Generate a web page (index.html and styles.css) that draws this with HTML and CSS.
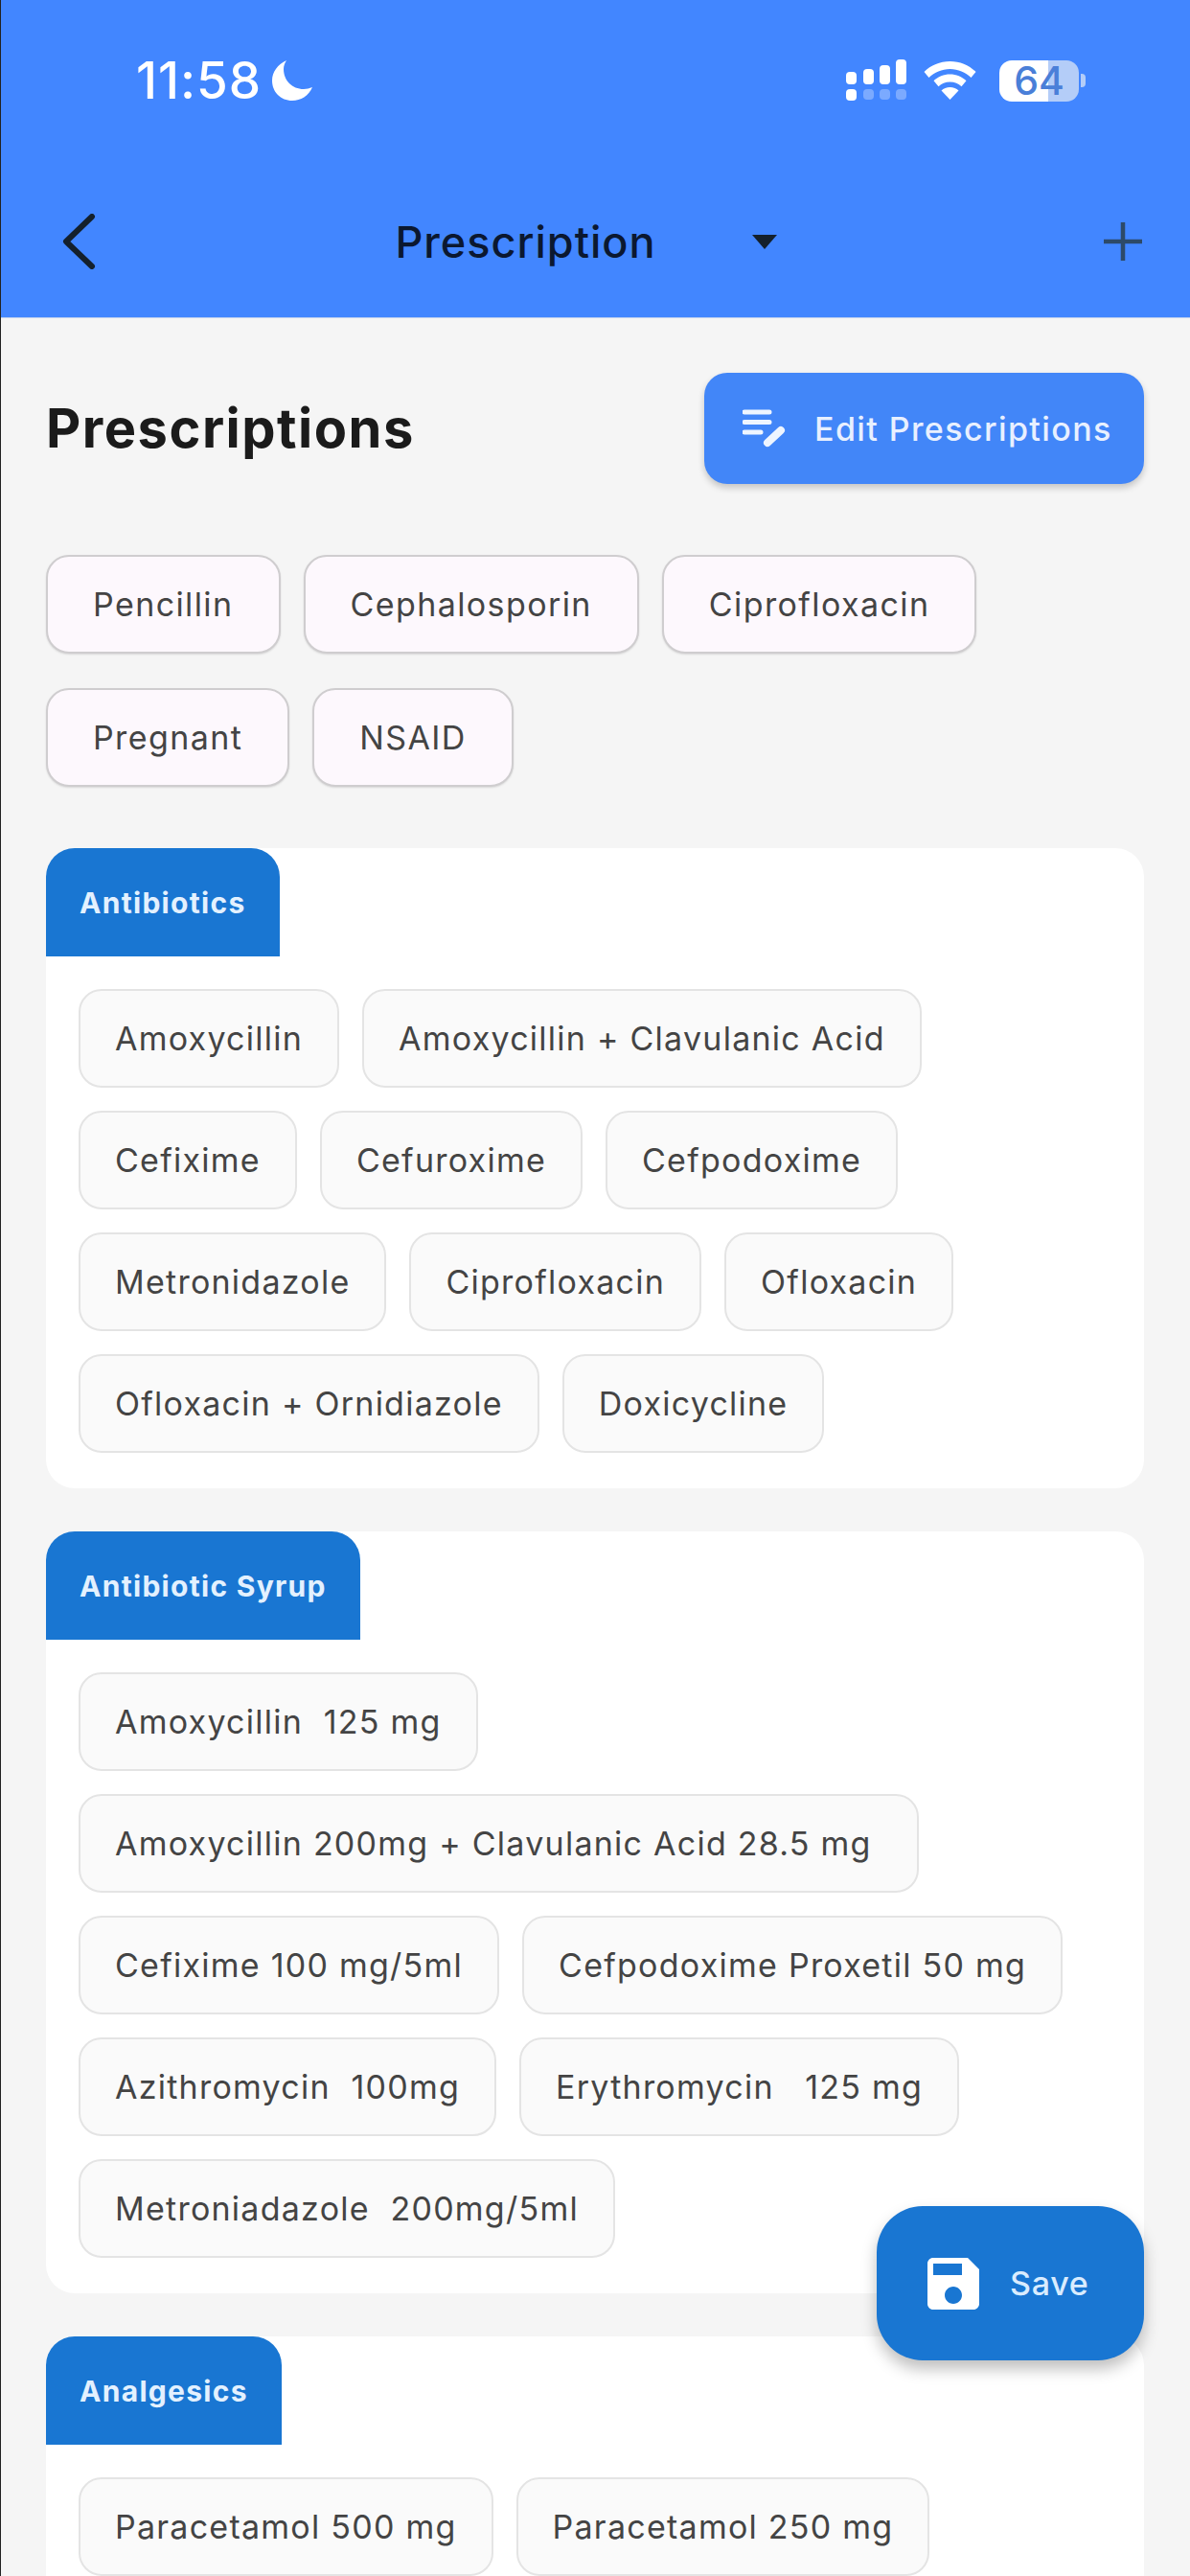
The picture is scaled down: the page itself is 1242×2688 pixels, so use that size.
FILE: index.html
```html
<!DOCTYPE html>
<html lang="en">
<head>
    <meta charset="UTF-8">
    <title>Prescription</title>
    <link rel="stylesheet" href="styles.css">
</head>
<body>
    <div class="screen">
        <header class="appbar">
            <div class="statusbar">
                <div class="status-left">
                    <span class="time">11:58</span>
                    <svg class="moon" viewBox="0 0 42 42"><path d="M15 0C6 4 0 12 0 21c0 12 9 21 21 21 9 0 17-5 21-14-3 1-6 2-9 2C21 30 12 21 12 9c0-3 1-6 3-9z" fill="#fff"/></svg>
                </div>
                <div class="status-right">
                    <svg class="signal" viewBox="0 0 64 44">
                        <g fill="#fff">
                            <rect x="0" y="13" width="11" height="13" rx="4"/>
                            <rect x="18" y="10" width="11" height="16" rx="4"/>
                            <rect x="35" y="6" width="11" height="20" rx="4"/>
                            <rect x="52" y="0" width="11" height="26" rx="4"/>
                            <rect x="0" y="31" width="11" height="12" rx="4"/>
                        </g>
                        <g fill="#fff" opacity="0.3">
                            <rect x="18" y="31" width="11" height="11" rx="4"/>
                            <rect x="35" y="31" width="11" height="11" rx="4"/>
                            <rect x="52" y="31" width="11" height="11" rx="4"/>
                        </g>
                    </svg>
                    <svg class="wifi" viewBox="0 0 55 40">
                        <path d="M27.5 0C17 0 7.500 4 0.500 11l5 6c5.800-5.500 13.500-9 22-9s16.200 3.500 22 9l5-6C47.500 4 38 0 27.500 0z" fill="#fff"/>
                        <path d="M27.500 13.500c-6.500 0-12.500 2.600-17 6.800l5 6c3-3 7.200-4.800 12-4.800s9 1.800 12 4.800l5-6c-4.500-4.200-10.500-6.800-17-6.800z" fill="#fff"/>
                        <path d="M27.500 27c-3.500 0-6.800 1.400-9 3.500L27.500 40l9-9.500c-2.200-2.100-5.500-3.500-9-3.500z" fill="#fff"/>
                    </svg>
                    <div class="battery">
                        <span class="battery-level">64</span>
                    </div>
                    <span class="battery-nub"></span>
                </div>
            </div>
            <div class="toolbar">
                <svg class="back" viewBox="0 0 36 58"><path d="M32 3L5 29l27 26" fill="none" stroke="#14202c" stroke-width="6" stroke-linecap="round" stroke-linejoin="round"/></svg>
                <div class="picker">
                    <span class="picker-label">Prescription</span>
                    <span class="picker-arrow"></span>
                </div>
                <svg class="plus" viewBox="0 0 42 42"><path d="M21 1v40M1 21h40" fill="none" stroke="#2d4a68" stroke-width="4.500"/></svg>
            </div>
        </header>

        <main class="content">
            <div class="title-row">
                <h1 class="title">Prescriptions</h1>
                <button class="edit-btn">
                    <svg class="edit-icon" viewBox="0 0 46 40">
                        <path d="M2 3h26M2 13.500h26M2 24h17" fill="none" stroke="#eef5ff" stroke-width="5" stroke-linecap="round"/>
                        <path d="M26 35l14-13" fill="none" stroke="#eef5ff" stroke-width="8" stroke-linecap="round"/>
                    </svg>
                    Edit Prescriptions
                </button>
            </div>

            <div class="chips filters">
                <span class="chip filter">Pencillin</span>
                <span class="chip filter">Cephalosporin</span>
                <span class="chip filter">Ciprofloxacin</span>
                <span class="chip filter">Pregnant</span>
                <span class="chip filter">NSAID</span>
            </div>

            <section class="card">
                <div class="tab">Antibiotics</div>
                <div class="chips">
                    <span class="chip">Amoxycillin</span>
                    <span class="chip">Amoxycillin + Clavulanic Acid</span>
                    <span class="chip">Cefixime</span>
                    <span class="chip">Cefuroxime</span>
                    <span class="chip">Cefpodoxime</span>
                    <span class="chip">Metronidazole</span>
                    <span class="chip">Ciprofloxacin</span>
                    <span class="chip">Ofloxacin</span>
                    <span class="chip">Ofloxacin + Ornidiazole</span>
                    <span class="chip">Doxicycline</span>
                </div>
            </section>

            <section class="card">
                <div class="tab">Antibiotic Syrup</div>
                <div class="chips">
                    <span class="chip">Amoxycillin&nbsp; 125 mg</span>
                    <span class="chip">Amoxycillin 200mg + Clavulanic Acid 28.5 mg&nbsp;</span>
                    <span class="chip">Cefixime 100 mg/5ml</span>
                    <span class="chip">Cefpodoxime Proxetil 50 mg</span>
                    <span class="chip">Azithromycin&nbsp; 100mg</span>
                    <span class="chip">Erythromycin&nbsp;&nbsp; 125 mg</span>
                    <span class="chip">Metroniadazole&nbsp; 200mg/5ml</span>
                </div>
            </section>

            <section class="card">
                <div class="tab">Analgesics</div>
                <div class="chips">
                    <span class="chip">Paracetamol 500 mg</span>
                    <span class="chip">Paracetamol 250 mg</span>
                </div>
            </section>
        </main>

        <button class="save-btn">
            <svg class="save-icon" viewBox="3 3 18 18"><path d="M17 3H5c-1.110 0-2 .9-2 2v14c0 1.100.89 2 2 2h14c1.100 0 2-.9 2-2V7l-4-4zm-5 16c-1.660 0-3-1.340-3-3s1.340-3 3-3 3 1.340 3 3-1.340 3-3 3zm3-10H5V5h10v4z" fill="#fff"/></svg>
            Save
        </button>
    </div>
</body>
</html>
```

FILE: styles.css
```css
* {
    box-sizing: border-box;
    margin: 0;
    padding: 0;
    font-family: Inter, "Noto Sans", sans-serif;
}
body {
    background-color: #f5f5f5;
}
.screen {
    position: relative;
    width: 1242px;
    height: 2688px;
    overflow: hidden;
    background-color: #f5f5f5;
}
/* thin dark edge of the capture */
.screen::before {
    content: "";
    position: absolute;
    left: 0;
    top: 0;
    width: 1px;
    height: 100%;
    background-color: #222;
}

/* top bar */
.appbar {
    height: 332px;
    padding-top: 60px;
    background-color: #4286ff;
    border-bottom: 1px solid #b9cdf0;
}
.statusbar {
    display: flex;
    justify-content: space-between;
    align-items: center;
    height: 48px;
    padding: 0 109px 0 142px;
}
.status-left,
.status-right {
    display: flex;
    align-items: center;
}
.time {
    font-size: 53px;
    font-weight: 500;
    line-height: 48px;
    letter-spacing: 1px;
    color: #fff;
}
.moon {
    width: 42px;
    height: 42px;
    margin-left: 11px;
}
.signal {
    width: 64px;
    height: 44px;
    margin-right: 17px;
}
.wifi {
    width: 55px;
    height: 40px;
    margin-right: 24px;
}
.battery {
    display: flex;
    align-items: center;
    justify-content: center;
    width: 83px;
    height: 43px;
    border-radius: 13px;
    background: linear-gradient(90deg, #fff 0, #fff 61%, #b4cdf8 61%);
}
.battery-level {
    font-size: 41px;
    font-weight: 500;
    color: #4a7fd8;
}
.battery-nub {
    width: 5px;
    height: 14px;
    margin-left: 2px;
    border-radius: 0 4px 4px 0;
    background-color: #b4cdf8;
}
.toolbar {
    display: flex;
    justify-content: space-between;
    align-items: center;
    height: 70px;
    margin-top: 109px;
    padding: 0 49px 0 64px;
}
.back {
    width: 36px;
    height: 58px;
}
.picker {
    display: flex;
    align-items: center;
    margin-right: 28px;
}
.picker-label {
    font-size: 45px;
    font-weight: 500;
    letter-spacing: 1px;
    color: #0b1830;
}
.picker-arrow {
    width: 0;
    height: 0;
    margin-left: 100px;
    border-left: 13px solid transparent;
    border-right: 13px solid transparent;
    border-top: 15px solid #14202c;
}
.plus {
    width: 42px;
    height: 42px;
}

/* content */
.content {
    padding: 57px 48px 0;
}
.title-row {
    display: flex;
    justify-content: space-between;
    align-items: center;
}
.title {
    font-size: 56px;
    font-weight: 700;
    letter-spacing: 1.500px;
    color: #1b1b1b;
}
.edit-btn {
    display: flex;
    align-items: center;
    gap: 29px;
    width: 459px;
    height: 116px;
    padding-left: 40px;
    border: none;
    border-radius: 24px;
    font-size: 34px;
    font-weight: 500;
    letter-spacing: 1.400px;
    color: #e8f0ff;
    background-color: #4286f8;
    box-shadow: 0 4px 7px rgba(0, 0, 0, 0.2);
}
.edit-icon {
    width: 46px;
    height: 40px;
}
.chips {
    display: flex;
    flex-wrap: wrap;
    gap: 24px;
}
.chip {
    display: flex;
    align-items: center;
    height: 103px;
    padding: 0 36px;
    border: 2px solid #e4e4e4;
    border-radius: 24px;
    font-size: 34px;
    letter-spacing: 1.250px;
    white-space: pre;
    color: #444;
    background-color: #fafafa;
}
.filters {
    gap: 36px 24px;
    margin: 74px 0 64px;
}
.filter {
    padding: 0 47px;
    letter-spacing: 1.400px;
    border-color: #cfcdcf;
    background-color: #fdf8fd;
    box-shadow: 0 1px 2px rgba(0, 0, 0, 0.12);
}
.card {
    margin-bottom: 45px;
    border-radius: 30px;
    background-color: #fff;
}
.card .chips {
    padding: 34px 34px 37px;
}
.tab {
    display: inline-flex;
    align-items: center;
    height: 113px;
    padding: 0 35px;
    border-radius: 30px 30px 0 0;
    font-size: 30px;
    font-weight: 700;
    letter-spacing: 1.300px;
    color: #e3f1ff;
    background-color: #1976d2;
}

/* floating save */
.save-btn {
    position: absolute;
    left: 915px;
    top: 2302px;
    display: flex;
    align-items: center;
    gap: 32px;
    width: 279px;
    height: 161px;
    padding-left: 53px;
    border: none;
    border-radius: 48px;
    font-size: 34px;
    font-weight: 500;
    letter-spacing: 0.700px;
    color: #d9ecff;
    background-color: #1976d2;
    box-shadow: 0 9px 16px rgba(0, 0, 0, 0.25);
}
.save-icon {
    width: 54px;
    height: 54px;
}
```
